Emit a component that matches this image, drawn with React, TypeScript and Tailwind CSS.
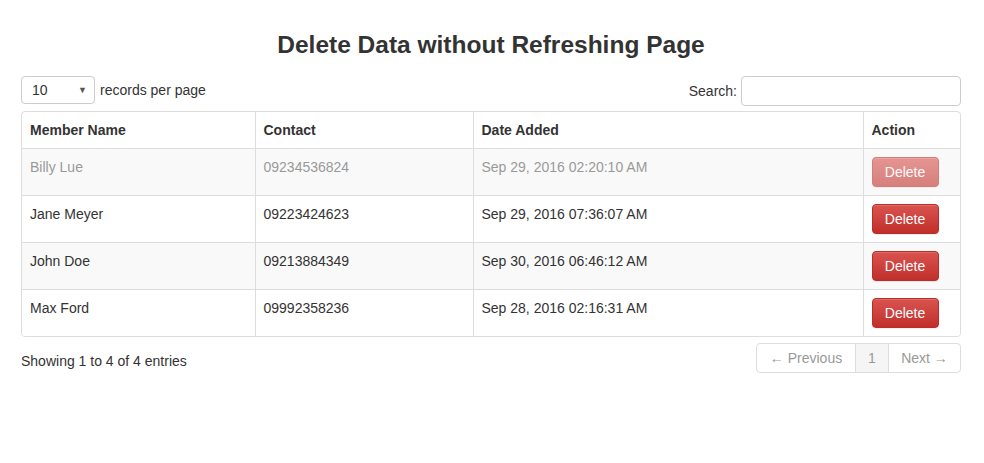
const members = [
  { name: "Billy Lue", contact: "09234536824", date: "Sep 29, 2016 02:20:10 AM", fading: true },
  { name: "Jane Meyer", contact: "09223424623", date: "Sep 29, 2016 07:36:07 AM", fading: false },
  { name: "John Doe", contact: "09213884349", date: "Sep 30, 2016 06:46:12 AM", fading: false },
  { name: "Max Ford", contact: "09992358236", date: "Sep 28, 2016 02:16:31 AM", fading: false },
];

export default function App() {
  return (
    <div className="min-h-[463px] bg-white pl-[21px] font-['Liberation_Sans',Arial,sans-serif] text-[14px] leading-[20px] text-[#333]">
      <div className="w-[940px] pt-[32px]">
        <h3 className="text-center text-[24.5px] font-bold leading-[26px] text-[#333]">
          Delete Data without Refreshing Page
        </h3>

        <div className="mt-[18px] flex items-start justify-between">
          <div className="flex items-center gap-[5px]">
            <div className="flex h-[28px] w-[74px] items-center justify-between rounded-[4px] border border-[#ccc] bg-white pl-[10px] pr-[7px]">
              <span>10</span>
              <span className="text-[9px] text-[#555]">▼</span>
            </div>
            <span className="-mt-[1px]">records per page</span>
          </div>
          <div className="flex items-center gap-[4px]">
            <span>Search:</span>
            <div className="h-[30px] w-[220px] rounded-[4px] border border-[#ccc] bg-white" />
          </div>
        </div>

        <div className="mt-[5px] overflow-hidden rounded-[4px] border border-[#ddd]">
          <table className="w-full border-collapse">
            <thead>
              <tr>
                <th className="w-[233px] p-[8px] text-left font-bold">Member Name</th>
                <th className="w-[218px] border-l border-[#ddd] p-[8px] text-left font-bold">Contact</th>
                <th className="w-[390px] border-l border-[#ddd] p-[8px] text-left font-bold">Date Added</th>
                <th className="border-l border-[#ddd] p-[8px] text-left font-bold">Action</th>
              </tr>
            </thead>
            <tbody>
              {members.map((m, i) => (
                <tr key={m.name} className={`${i % 2 === 0 ? "bg-[#f9f9f9]" : "bg-white"} ${m.fading ? "text-[#999]" : ""}`}>
                  <td className="border-t border-[#ddd] p-[8px] align-top">{m.name}</td>
                  <td className="border-t border-l border-[#ddd] p-[8px] align-top">{m.contact}</td>
                  <td className="border-t border-l border-[#ddd] p-[8px] align-top">{m.date}</td>
                  <td className="border-t border-l border-[#ddd] p-[8px] align-top">
                    <button
                      type="button"
                      className={`h-[30px] w-[67px] rounded-[4px] border border-[#b92c28] bg-gradient-to-b from-[#d9534f] to-[#c12e2a] text-[14px] text-white shadow-[inset_0_1px_0_rgba(255,255,255,0.15),0_1px_1px_rgba(0,0,0,0.075)] ${m.fading ? "opacity-60" : ""}`}
                    >
                      Delete
                    </button>
                  </td>
                </tr>
              ))}
            </tbody>
          </table>
        </div>

        <div className="mt-[6px] flex items-start justify-between">
          <div className="pt-[8px]">Showing 1 to 4 of 4 entries</div>
          <div className="flex h-[30px] overflow-hidden rounded-[4px] border border-[#ddd] text-[#999]">
            <span className="flex w-[98px] items-center justify-center">← Previous</span>
            <span className="flex w-[33px] items-center justify-center border-l border-[#ddd] bg-[#f5f5f5]">1</span>
            <span className="flex w-[72px] items-center justify-center border-l border-[#ddd]">Next →</span>
          </div>
        </div>
      </div>
    </div>
  );
}
